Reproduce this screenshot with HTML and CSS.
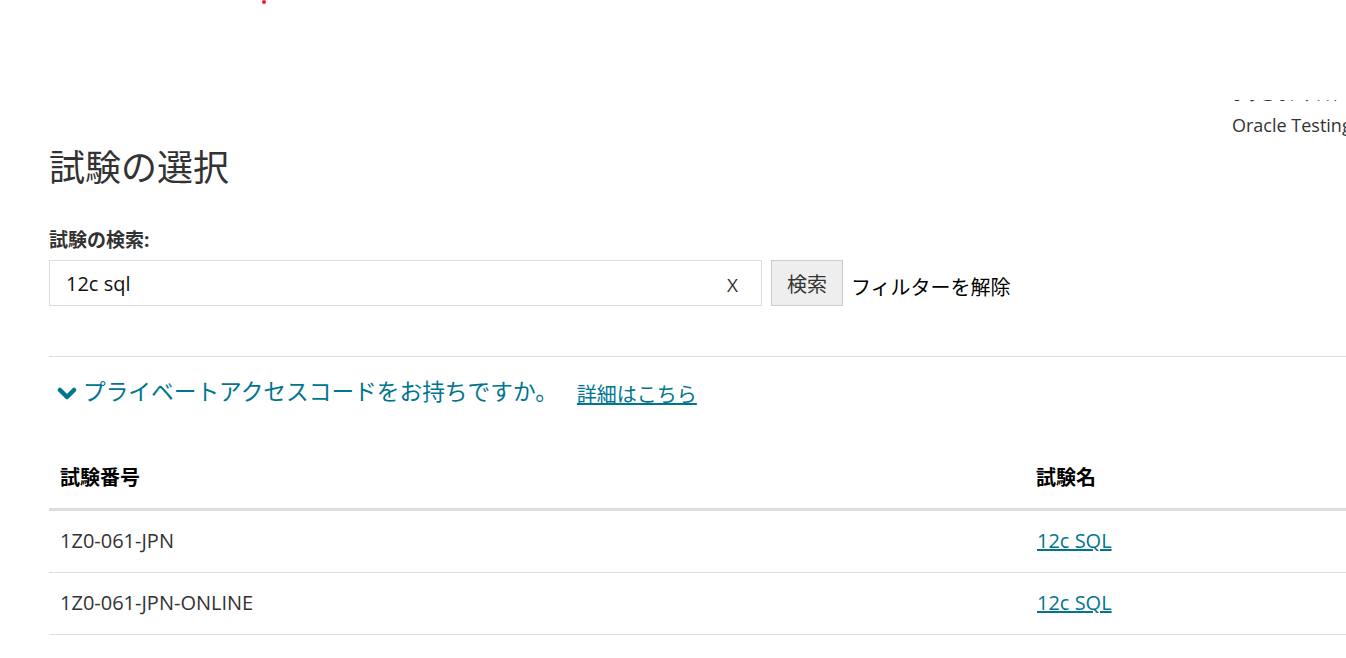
FILE: index.html
```html
<!DOCTYPE html>
<html lang="ja">
<head>
  <meta charset="UTF-8">
  <title>試験の選択</title>
  <meta name="viewport" content="width=device-width, initial-scale=1">
  <link rel="stylesheet" href="styles.css">
</head>
<body>
  <div class="page">
    <div class="topbar">
      <span class="loader-dot"></span>
      <div class="account">
        <div class="account-top"><span>ようこそ、ゲスト様 | ログアウト</span></div>
        <div class="account-name">Oracle Testing ID</div>
      </div>
    </div>

    <h1>試験の選択</h1>

    <label class="search-label" for="search">試験の検索:</label>
    <div class="search-row">
      <div class="search-box">
        <input id="search" type="text" value="12c sql">
        <span class="clear">X</span>
      </div>
      <button class="search-btn">検索</button>
      <a class="reset">フィルターを解除</a>
    </div>

    <hr class="divider">

    <div class="private">
      <svg class="chevron" width="20" height="13" viewBox="0 0 20 13">
        <polyline points="3,3 10,10 17,3" fill="none" stroke="#00758f" stroke-width="4.5" stroke-linecap="round" stroke-linejoin="round"/>
      </svg>
      <span class="private-text">プライベートアクセスコードをお持ちですか。</span>
      <a class="more" href="#">詳細はこちら</a>
    </div>

    <table class="exams">
      <thead>
        <tr><th class="col-num">試験番号</th><th>試験名</th></tr>
      </thead>
      <tbody>
        <tr><td>1Z0-061-JPN</td><td><a href="#">12c SQL</a></td></tr>
        <tr><td>1Z0-061-JPN-ONLINE</td><td><a href="#">12c SQL</a></td></tr>
      </tbody>
    </table>
  </div>
</body>
</html>
```

FILE: styles.css
```css
html, body { overflow-x: hidden; }
body { margin: 0; background: #fff; color: #333; font-family: "Open Sans", "Noto Sans CJK JP", sans-serif; }
.page { width: 1400px; padding-left: 49px; box-sizing: border-box; }

.topbar { display: flex; align-items: flex-start; height: 137px; }
.loader-dot { width: 4px; height: 4px; border-radius: 50%; background: #e8222a; margin-left: 213px; margin-top: 0; }
.account { margin-left: auto; width: 168px; margin-top: 100px; }
.account-top { height: 6px; overflow: hidden; font-size: 14px; line-height: 20px; color: #333; white-space: nowrap; }
.account-top span { display: block; margin-top: -15px; }
.account-name { font-size: 18px; line-height: 24px; margin-top: 7px; white-space: nowrap; color: #333; }

h1 { font-size: 36px; line-height: 44px; font-weight: 400; margin: 9px 0 0; color: #333; }

.search-label { display: block; font-size: 19px; line-height: 24px; font-weight: bold; margin-top: 38px; color: #333; }

.search-row { display: flex; align-items: center; margin-top: 8px; height: 46px; }
.search-box { display: flex; align-items: center; width: 713px; height: 46px; box-sizing: border-box; border: 1px solid #ddd; background: #fff; }
.search-box input { flex: 1; border: none; outline: none; font-family: inherit; font-size: 20px; color: #111; padding: 0 0 0 16px; height: 44px; background: transparent; }
.clear { font-size: 19px; color: #333; margin: 4px 23px 0 0; }
.search-btn { margin-left: 9px; height: 46px; padding: 0 15px; background: #eee; border: 1px solid #ccc; font-family: inherit; font-size: 20px; color: #333; }
.reset { margin-left: 8px; font-size: 20px; color: #000; margin-top: 6px; }

.divider { border: none; border-top: 1px solid #ddd; margin: 50px 0 0; }

.private { display: flex; align-items: center; margin-top: 20px; height: 30px; color: #00758f; }
.chevron { margin-left: 8px; margin-top: 2px; }
.private-text { margin-left: 6px; font-size: 22.7px; line-height: 30px; }
.more { margin-left: 19px; font-size: 20px; color: #00758f; text-decoration: underline; margin-top: 3px; }

.exams { border-collapse: collapse; width: 1351px; margin-top: 38px; }
.exams th { text-align: left; font-size: 20px; line-height: 26px; font-weight: bold; color: #000; padding: 20px 11px 17px 10px; border-bottom: 3px solid #ddd; }
.exams th.col-num { width: 955px; padding-left: 11px; }
.exams td { font-size: 20px; line-height: 27px; padding: 16px 11px 18px 11px; border-bottom: 1px solid #ddd; color: #333; }
.exams td a { color: #00758f; text-decoration: underline; }
```
